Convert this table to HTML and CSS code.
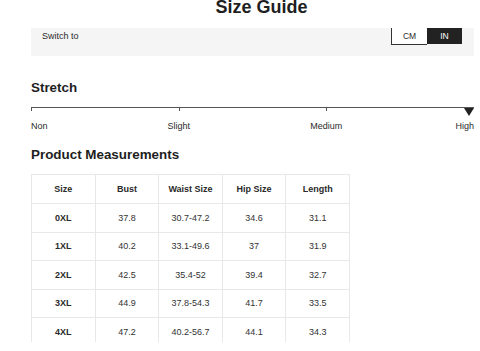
FILE: index.html
```
<!DOCTYPE html>
<html lang="en">
<head>
<meta charset="utf-8">
<title>Size Guide</title>
<link rel="stylesheet" href="styles.css">
</head>
<body>
<div class="page">
  <h1 class="title">Size Guide</h1>
  <div class="unit-bar">
    <span class="switch-label">Switch to</span>
    <div class="toggle">
      <span class="opt">CM</span>
      <span class="opt active">IN</span>
    </div>
  </div>

  <h2 class="heading stretch-h">Stretch</h2>
  <div class="scale">
    <div class="seg"></div>
    <div class="seg"></div>
    <div class="seg"></div>
    <span class="marker"></span>
  </div>
  <div class="scale-labels">
    <span class="lbl non">Non</span>
    <span class="lbl slight">Slight</span>
    <span class="lbl medium">Medium</span>
    <span class="lbl high">High</span>
  </div>

  <h2 class="heading pm-h">Product Measurements</h2>
  <div class="table-wrap">
    <table class="sizes">
      <thead>
        <tr><th>Size</th><th>Bust</th><th>Waist Size</th><th>Hip Size</th><th>Length</th></tr>
      </thead>
      <tbody>
        <tr><th>0XL</th><td>37.8</td><td>30.7-47.2</td><td>34.6</td><td>31.1</td></tr>
        <tr><th>1XL</th><td>40.2</td><td>33.1-49.6</td><td>37</td><td>31.9</td></tr>
        <tr><th>2XL</th><td>42.5</td><td>35.4-52</td><td>39.4</td><td>32.7</td></tr>
        <tr><th>3XL</th><td>44.9</td><td>37.8-54.3</td><td>41.7</td><td>33.5</td></tr>
        <tr><th>4XL</th><td>47.2</td><td>40.2-56.7</td><td>44.1</td><td>34.3</td></tr>
      </tbody>
    </table>
  </div>
</div>
</body>
</html>
```
FILE: styles.css
```
html, body {
  margin: 0;
  padding: 0;
  background: #fff;
}
body {
  font-family: "Liberation Sans", Arial, sans-serif;
  color: #222;
  overflow: hidden;
}
.page {
  padding: 0 6px 0 31px;
}
.title {
  margin: -3px 0 0 0;
  padding-left: 18px;
  text-align: center;
  font-size: 18px;
  line-height: 20px;
  font-weight: 700;
  color: #1e1e1e;
}
.unit-bar {
  margin-top: 11px;
  height: 28px;
  background: #f5f5f5;
  display: flex;
  justify-content: space-between;
  align-items: flex-start;
  padding: 0 12px 0 11px;
}
.switch-label {
  font-size: 9px;
  line-height: 11px;
  padding-top: 3px;
  color: #2a2a2a;
}
.toggle {
  display: flex;
}
.opt {
  width: 35px;
  height: 16px;
  line-height: 16px;
  text-align: center;
  font-size: 8.5px;
  color: #2a2a2a;
  background: #fff;
  border-left: 1px solid #333;
  border-bottom: 1px solid #333;
}
.opt.active {
  background: #222;
  color: #fff;
  border: none;
  width: 35px;
}
.heading {
  font-size: 13.4px;
  line-height: 16px;
  font-weight: 700;
  margin: 0;
  color: #1e1e1e;
}
.stretch-h {
  margin-top: 24px;
}
.scale {
  position: relative;
  margin-top: 11px;
  display: grid;
  grid-template-columns: repeat(3, 1fr);
  border-top: 1px solid #555;
}
.seg {
  height: 3px;
  border-left: 1px solid #555;
}
.marker {
  position: absolute;
  right: 0;
  top: 0;
  width: 0;
  height: 0;
  border-left: 5.5px solid transparent;
  border-right: 5.5px solid transparent;
  border-top: 8px solid #222;
}
.scale-labels {
  margin-top: 10px;
  display: grid;
  grid-template-columns: repeat(6, 1fr);
  font-size: 9px;
  line-height: 11px;
  color: #2a2a2a;
}
.lbl.non { grid-column: 1; text-align: left; }
.lbl.slight { grid-column: 2 / 4; text-align: center; }
.lbl.medium { grid-column: 4 / 6; text-align: center; }
.lbl.high { grid-column: 6; text-align: right; }
.pm-h {
  margin-top: 15px;
}
.table-wrap {
  margin-top: 11px;
  width: 319px;
  height: 168px;
  overflow: hidden;
}
.sizes {
  border-collapse: collapse;
  table-layout: fixed;
  width: 319px;
  font-size: 9px;
  color: #333;
}
.sizes th, .sizes td {
  border: 1px solid #e8e8e8;
  text-align: center;
  padding: 0;
  height: 27.4px;
}
.sizes thead th {
  height: 28.4px;
}
.sizes th {
  font-weight: 700;
  color: #2a2a2a;
}
```
